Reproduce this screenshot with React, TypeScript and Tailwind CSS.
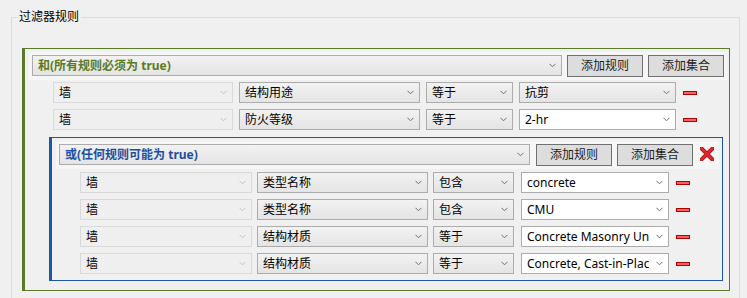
import React from 'react';

type Kind = 'off' | 'norm' | 'edit';

function Chevron({ muted }: { muted?: boolean }) {
  return (
    <svg width="7" height="5" viewBox="0 0 7 5" className="shrink-0">
      <polyline points="0.5,0.8 3.5,3.8 6.5,0.8" fill="none" stroke={muted ? '#c4c4c4' : '#6e6e6e'} strokeWidth="1" />
    </svg>
  );
}

function Combo({ text, w, kind = 'norm', tone }: { text: string; w: number; kind?: Kind; tone?: string }) {
  const box =
    kind === 'off'
      ? 'border-[#d9d9d9] bg-[#efefef]'
      : kind === 'edit'
      ? 'border-[#acacac] bg-white'
      : 'border-[#acacac] bg-gradient-to-b from-[#f2f2f2] to-[#e4e4e4]';
  return (
    <div className={`flex h-[21px] shrink-0 items-center border ${box}`} style={{ width: w }}>
      <span className={`min-w-0 flex-1 overflow-hidden whitespace-nowrap pl-[5px] text-[12px] leading-[19px] ${tone ?? 'text-black'}`}>
        {text}
      </span>
      <span className="flex w-[19px] shrink-0 justify-end pr-[5px]">
        <Chevron muted={kind === 'off'} />
      </span>
    </div>
  );
}

function Btn({ label }: { label: string }) {
  return (
    <button className="flex h-[22px] w-[76px] shrink-0 items-center justify-center border border-[#707070] bg-[#dddddd] text-[12px] leading-[20px] text-[#1e1e1e]">
      {label}
    </button>
  );
}

function Minus() {
  return <span className="block h-[4px] w-[14px] shrink-0 border border-[#b40000] bg-[#f26464]" />;
}

function CloseX() {
  return (
    <svg width="14" height="14" viewBox="0 0 14 14" className="shrink-0">
      <path d="M1.5 1.5 L12.5 12.5 M12.5 1.5 L1.5 12.5" stroke="#a8161c" strokeWidth="4" strokeLinecap="square" />
      <path d="M1.5 1.5 L12.5 12.5 M12.5 1.5 L1.5 12.5" stroke="#e0262d" strokeWidth="2.4" strokeLinecap="square" />
    </svg>
  );
}

type Rule = { cat: string; prop: string; op: string; val: string; edit?: boolean };

const andRules: Rule[] = [
  { cat: '墙', prop: '结构用途', op: '等于', val: '抗剪' },
  { cat: '墙', prop: '防火等级', op: '等于', val: '2-hr', edit: true },
];

const orRules: Rule[] = [
  { cat: '墙', prop: '类型名称', op: '包含', val: 'concrete', edit: true },
  { cat: '墙', prop: '类型名称', op: '包含', val: 'CMU', edit: true },
  { cat: '墙', prop: '结构材质', op: '等于', val: 'Concrete Masonry Units', edit: true },
  { cat: '墙', prop: '结构材质', op: '等于', val: 'Concrete, Cast-in-Place', edit: true },
];

export default function App() {
  return (
    <div className="h-[298px] w-[747px] overflow-hidden bg-[#f0f0f0] pl-[11px] pr-[7px] pt-[17px] font-['Noto_Sans','Noto_Sans_CJK_SC',sans-serif] text-black">
      <div className="relative h-[300px] border border-[#dcdcdc] pl-[10px] pr-[9px] pt-[30px]">
        <span className="absolute -top-[9px] left-[5px] bg-[#f0f0f0] px-[2px] text-[12px] leading-[16px]">过滤器规则</span>

        {/* AND group */}
        <div className="h-[243px] border border-l-[3px] border-[#5b7b2b] pl-[4px] pr-[2px] pt-[3px]">
          <div className="flex items-start gap-[5px] bg-[#f6f6f6] p-[3px]">
            <Combo text="和(所有规则必须为 true)" w={530} tone="font-bold text-[#5b7b23]" />
            <Btn label="添加规则" />
            <Btn label="添加集合" />
          </div>

          <div className="ml-[24px] mt-[2px] flex flex-col gap-[6px]">
            {andRules.map((r, i) => (
              <div key={i} className="flex items-center">
                <Combo text={r.cat} w={180} kind="off" />
                <div className="ml-[6px]"><Combo text={r.prop} w={181} /></div>
                <div className="ml-[6px]"><Combo text={r.op} w={87} /></div>
                <div className="ml-[6px]"><Combo text={r.val} w={157} kind={r.edit ? 'edit' : 'norm'} /></div>
                <div className="ml-[7px]"><Minus /></div>
              </div>
            ))}
          </div>

          {/* OR group */}
          <div className="ml-[20px] mr-[4px] mt-[7px] h-[144px] border border-l-[3px] border-[#1f55a6] pl-[4px] pr-[3px] pt-[3px]">
            <div className="flex items-start bg-[#f6f6f6] p-[3px]">
              <Combo text="或(任何规则可能为 true)" w={471} tone="font-bold text-[#1f4f9f]" />
              <div className="ml-[6px]"><Btn label="添加规则" /></div>
              <div className="ml-[5px]"><Btn label="添加集合" /></div>
              <div className="ml-[7px] mt-[3px]"><CloseX /></div>
            </div>

            <div className="ml-[24px] mt-[3px] flex flex-col gap-[6px]">
              {orRules.map((r, i) => (
                <div key={i} className="flex items-center">
                  <Combo text={r.cat} w={172} kind="off" />
                  <div className="ml-[5px]"><Combo text={r.prop} w={171} /></div>
                  <div className="ml-[5px]"><Combo text={r.op} w={81} /></div>
                  <div className="ml-[7px]"><Combo text={r.val} w={148} kind={r.edit ? 'edit' : 'norm'} /></div>
                  <div className="ml-[7px]"><Minus /></div>
                </div>
              ))}
            </div>
          </div>
        </div>
      </div>
    </div>
  );
}
